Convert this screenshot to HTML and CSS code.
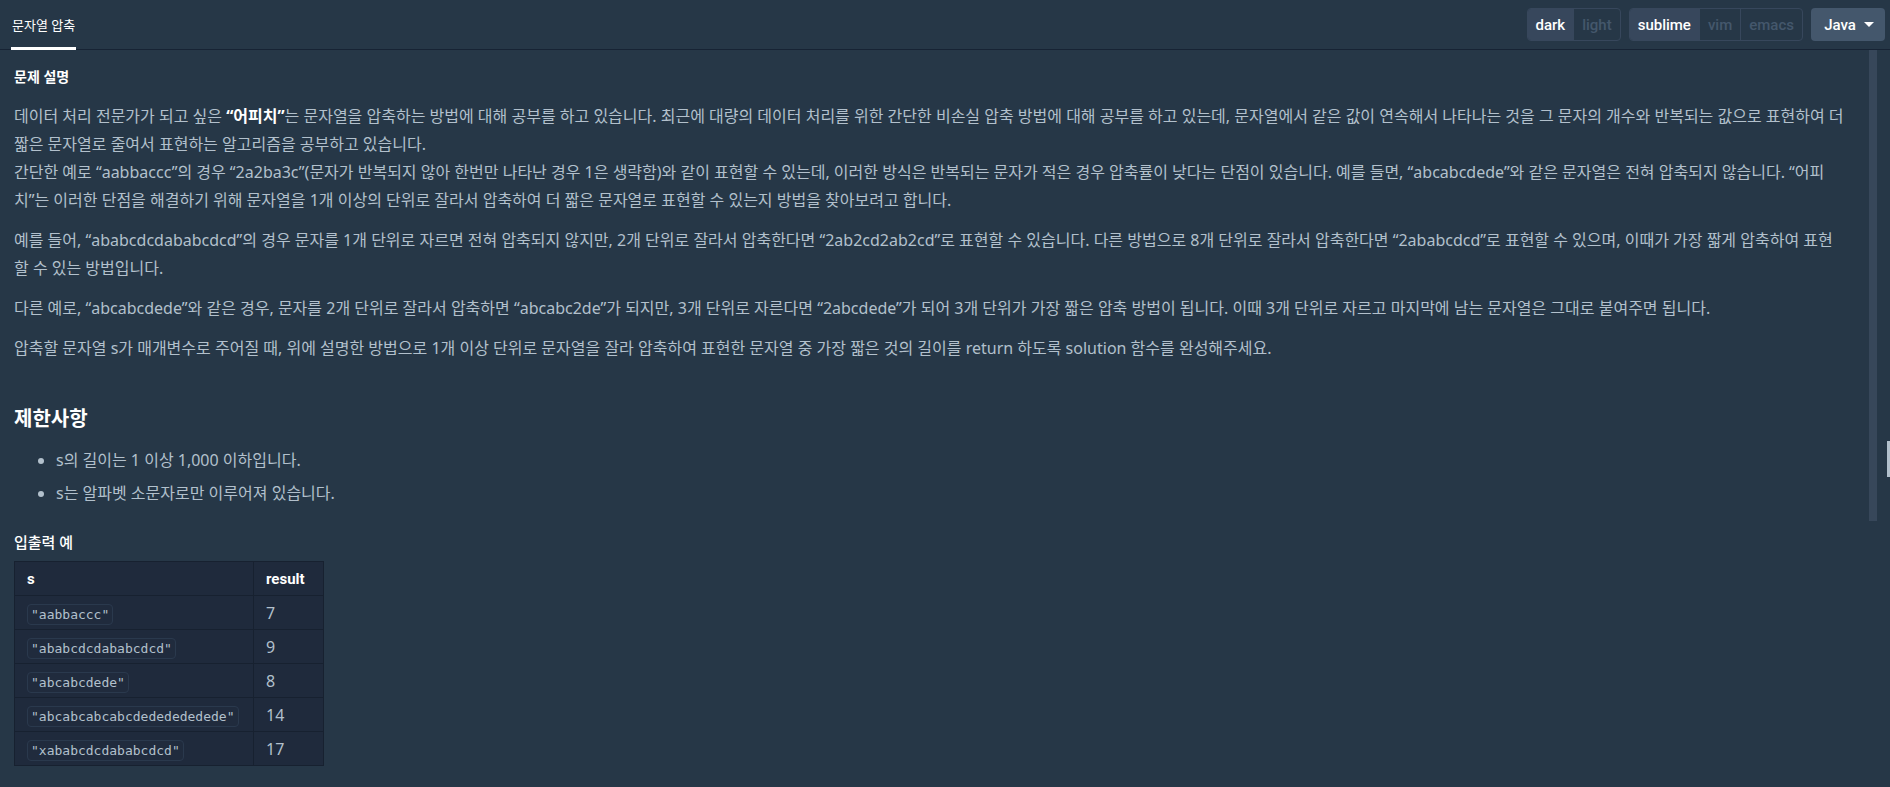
FILE: index.html
```html
<!DOCTYPE html>
<html lang="ko">
<head>
    <meta charset="UTF-8">
    <meta name="viewport" content="width=device-width, initial-scale=1.0">
    <title>문자열 압축</title>
    <link rel="stylesheet" href="styles.css">
</head>
<body>
    <!-- 상단 탭 / 설정 -->
    <header class="topbar">
        <nav class="tabs">
            <div class="tab active">문자열 압축</div>
        </nav>
        <div class="settings">
            <div class="btn-group">
                <span class="seg on">dark</span>
                <span class="seg">light</span>
            </div>
            <div class="btn-group">
                <span class="seg on">sublime</span>
                <span class="seg">vim</span>
                <span class="seg">emacs</span>
            </div>
            <button class="lang-btn">Java <span class="caret"></span></button>
        </div>
    </header>

    <!-- 문제 본문 -->
    <main class="guide">
        <div class="description">
            <h6 class="section-title">문제 설명</h6>
            <p>데이터 처리 전문가가 되고 싶은 <strong>“어피치”</strong>는 문자열을 압축하는 방법에 대해 공부를 하고 있습니다. 최근에 대량의 데이터 처리를 위한 간단한 비손실 압축 방법에 대해 공부를 하고 있는데, 문자열에서 같은 값이 연속해서 나타나는 것을 그 문자의 개수와 반복되는 값으로 표현하여 더 짧은 문자열로 줄여서 표현하는 알고리즘을 공부하고 있습니다.<br>간단한 예로 “aabbaccc”의 경우 “2a2ba3c”(문자가 반복되지 않아 한번만 나타난 경우 1은 생략함)와 같이 표현할 수 있는데, 이러한 방식은 반복되는 문자가 적은 경우 압축률이 낮다는 단점이 있습니다. 예를 들면, “abcabcdede”와 같은 문자열은 전혀 압축되지 않습니다. “어피치”는 이러한 단점을 해결하기 위해 문자열을 1개 이상의 단위로 잘라서 압축하여 더 짧은 문자열로 표현할 수 있는지 방법을 찾아보려고 합니다.</p>
            <p>예를 들어, “ababcdcdababcdcd”의 경우 문자를 1개 단위로 자르면 전혀 압축되지 않지만, 2개 단위로 잘라서 압축한다면 “2ab2cd2ab2cd”로 표현할 수 있습니다. 다른 방법으로 8개 단위로 잘라서 압축한다면 “2ababcdcd”로 표현할 수 있으며, 이때가 가장 짧게 압축하여 표현할 수 있는 방법입니다.</p>
            <p>다른 예로, “abcabcdede”와 같은 경우, 문자를 2개 단위로 잘라서 압축하면 “abcabc2de”가 되지만, 3개 단위로 자른다면 “2abcdede”가 되어 3개 단위가 가장 짧은 압축 방법이 됩니다. 이때 3개 단위로 자르고 마지막에 남는 문자열은 그대로 붙여주면 됩니다.</p>
            <p>압축할 문자열 s가 매개변수로 주어질 때, 위에 설명한 방법으로 1개 이상 단위로 문자열을 잘라 압축하여 표현한 문자열 중 가장 짧은 것의 길이를 return 하도록 solution 함수를 완성해주세요.</p>

            <h5 class="sub-title">제한사항</h5>
            <ul>
                <li>s의 길이는 1 이상 1,000 이하입니다.</li>
                <li>s는 알파벳 소문자로만 이루어져 있습니다.</li>
            </ul>

            <h5 class="io-title">입출력 예</h5>
            <table class="io-table">
                <thead>
                    <tr><th class="col-s">s</th><th>result</th></tr>
                </thead>
                <tbody>
                    <tr><td><code>"aabbaccc"</code></td><td>7</td></tr>
                    <tr><td><code>"ababcdcdababcdcd"</code></td><td>9</td></tr>
                    <tr><td><code>"abcabcdede"</code></td><td>8</td></tr>
                    <tr><td><code>"abcabcabcabcdededededede"</code></td><td>14</td></tr>
                    <tr><td><code>"xababcdcdababcdcd"</code></td><td>17</td></tr>
                </tbody>
            </table>
        </div>
        <div class="scroll-track"></div>
    </main>
    <div class="gutter-handle"></div>
</body>
</html>
```

FILE: styles.css
```css
html, body {
    margin: 0;
    height: 100%;
}
body {
    background-color: #263747;
    color: #b2c0cc;
    font-family: "Noto Sans", "Noto Sans CJK KR", sans-serif;
    font-size: 16px;
    overflow: hidden;
    position: relative;
}

/* 상단 바 */
.topbar {
    height: 49px;
    border-bottom: 1px solid #172334;
    display: flex;
    justify-content: space-between;
    align-items: center;
    padding: 0 5px 0 11px;
}
.tabs {
    display: flex;
    height: 100%;
    align-items: stretch;
}
.tab {
    color: #ffffff;
    font-size: 13px;
    padding: 2px 1px 0 1px;
    display: flex;
    align-items: center;
    border-bottom: 3px solid transparent;
    margin-bottom: -1px;
}
.tab.active {
    border-bottom-color: #ffffff;
}
.settings {
    display: flex;
    gap: 8px;
    align-items: center;
    font-family: Roboto, sans-serif;
}
.btn-group {
    display: flex;
    height: 33px;
    border: 1px solid #37475c;
    border-radius: 4px;
    overflow: hidden;
    box-sizing: border-box;
}
.seg {
    display: flex;
    align-items: center;
    padding: 0 8px;
    font-size: 15px;
    font-weight: 500;
    color: #44576c;
    border-left: 1px solid #37475c;
}
.seg:first-child {
    border-left: none;
}
.seg.on {
    background-color: #37475c;
    color: #ffffff;
}
.lang-btn {
    height: 33px;
    width: 74px;
    border: none;
    border-radius: 4px;
    background-color: #44576c;
    color: #ffffff;
    font-family: Roboto, sans-serif;
    font-size: 15px;
    font-weight: 500;
    display: flex;
    align-items: center;
    justify-content: center;
    gap: 8px;
    padding: 0 0 0 2px;
}
.caret {
    width: 0;
    height: 0;
    border-left: 5px solid transparent;
    border-right: 5px solid transparent;
    border-top: 5px solid #ffffff;
}

/* 본문 */
.guide {
    display: flex;
    height: calc(100% - 50px);
}
.description {
    flex: 1;
    padding: 16px 23px 0 14px;
    overflow: hidden;
}
.scroll-track {
    width: 8px;
    height: 471px;
    background-color: #37475a;
    margin-right: 13px;
}
.gutter-handle {
    position: absolute;
    right: 0;
    top: 441px;
    width: 3px;
    height: 36px;
    background-color: #b2c0cc;
}

.section-title {
    margin: 0 0 15px 0;
    font-size: 14px;
    font-weight: 700;
    color: #ffffff;
    line-height: 21px;
}
.description p {
    margin: 0 0 12px 0;
    line-height: 28px;
}
.description strong {
    color: #ffffff;
    font-weight: 700;
}
.sub-title {
    margin: 42px 0 12px 0;
    font-size: 20px;
    font-weight: 700;
    color: #ffffff;
    line-height: 30px;
}
.description ul {
    margin: 0 0 24px 0;
    padding-left: 42px;
}
.description li {
    line-height: 28px;
    margin-bottom: 5px;
}
.io-title {
    margin: 0 0 8px 0;
    font-size: 15px;
    font-weight: 500;
    color: #ffffff;
    line-height: 22px;
}

/* 입출력 표 */
.io-table {
    border-collapse: collapse;
    background-color: #1f2a3c;
    width: 310px;
}
.io-table th,
.io-table td {
    border: 1px solid #172130;
    height: 33px;
    padding: 0 12px;
    text-align: left;
}
.io-table th {
    color: #ffffff;
    font-weight: 700;
    font-size: 15px;
    font-family: Roboto, "Noto Sans CJK KR", sans-serif;
}
.io-table .col-s {
    width: 211px;
    padding-right: 15px;
}
.io-table td {
    color: #b2c0cc;
    font-size: 16px;
}
.io-table code {
    font-family: "DejaVu Sans Mono", monospace;
    font-size: 13px;
    line-height: 16px;
    color: #b2c0cc;
    background-color: #202b3d;
    border: 1px solid #2a394d;
    border-radius: 4px;
    padding: 2px 3px;
}
```
